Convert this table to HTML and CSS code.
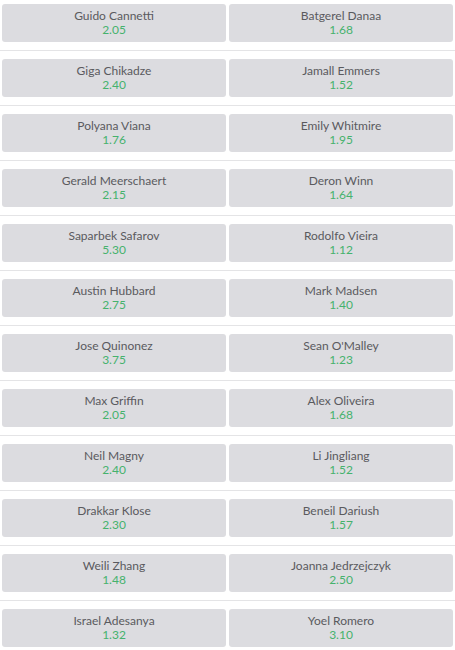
FILE: index.html
```html
<!DOCTYPE html>
<html>
<head>
<meta charset="utf-8">
<link rel="stylesheet" href="styles.css">
</head>
<body>
<div class="list">
  <div class="row"><div class="card"><div class="name">Guido Cannetti</div><div class="odds">2.05</div></div><div class="card"><div class="name">Batgerel Danaa</div><div class="odds">1.68</div></div></div>
  <div class="row"><div class="card"><div class="name">Giga Chikadze</div><div class="odds">2.40</div></div><div class="card"><div class="name">Jamall Emmers</div><div class="odds">1.52</div></div></div>
  <div class="row"><div class="card"><div class="name">Polyana Viana</div><div class="odds">1.76</div></div><div class="card"><div class="name">Emily Whitmire</div><div class="odds">1.95</div></div></div>
  <div class="row"><div class="card"><div class="name">Gerald Meerschaert</div><div class="odds">2.15</div></div><div class="card"><div class="name">Deron Winn</div><div class="odds">1.64</div></div></div>
  <div class="row"><div class="card"><div class="name">Saparbek Safarov</div><div class="odds">5.30</div></div><div class="card"><div class="name">Rodolfo Vieira</div><div class="odds">1.12</div></div></div>
  <div class="row"><div class="card"><div class="name">Austin Hubbard</div><div class="odds">2.75</div></div><div class="card"><div class="name">Mark Madsen</div><div class="odds">1.40</div></div></div>
  <div class="row"><div class="card"><div class="name">Jose Quinonez</div><div class="odds">3.75</div></div><div class="card"><div class="name">Sean O'Malley</div><div class="odds">1.23</div></div></div>
  <div class="row"><div class="card"><div class="name">Max Griffin</div><div class="odds">2.05</div></div><div class="card"><div class="name">Alex Oliveira</div><div class="odds">1.68</div></div></div>
  <div class="row"><div class="card"><div class="name">Neil Magny</div><div class="odds">2.40</div></div><div class="card"><div class="name">Li Jingliang</div><div class="odds">1.52</div></div></div>
  <div class="row"><div class="card"><div class="name">Drakkar Klose</div><div class="odds">2.30</div></div><div class="card"><div class="name">Beneil Dariush</div><div class="odds">1.57</div></div></div>
  <div class="row"><div class="card"><div class="name">Weili Zhang</div><div class="odds">1.48</div></div><div class="card"><div class="name">Joanna Jedrzejczyk</div><div class="odds">2.50</div></div></div>
  <div class="row"><div class="card"><div class="name">Israel Adesanya</div><div class="odds">1.32</div></div><div class="card"><div class="name">Yoel Romero</div><div class="odds">3.10</div></div></div>
</div>
</body>
</html>
```
FILE: styles.css
```css
html, body {
  margin: 0;
  padding: 0;
  background: #ffffff;
}
body {
  font-family: Lato, "Open Sans", sans-serif;
}
.list {
  display: flex;
  flex-direction: column;
  padding-top: 4px;
}
.row {
  display: grid;
  grid-template-columns: 1fr 1fr;
  column-gap: 3px;
  padding: 0 2px 8px;
  margin-bottom: 8px;
  border-bottom: 1px solid #e4e4e6;
}
.card {
  height: 38px;
  box-sizing: border-box;
  padding-top: 5px;
  background: #dcdce0;
  border-radius: 3px;
  text-align: center;
}
.name {
  font-size: 12px;
  line-height: 14px;
  color: #5a5a5e;
}
.odds {
  font-size: 12px;
  line-height: 13px;
  color: #45b26d;
}
```
